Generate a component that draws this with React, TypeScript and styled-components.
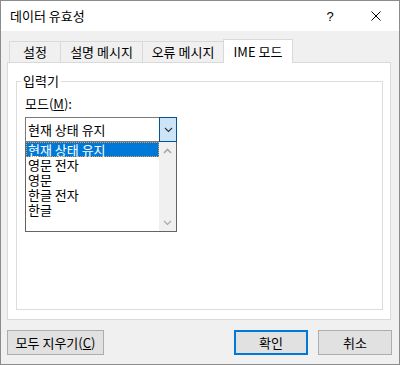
import styled, { createGlobalStyle } from "styled-components";

const GlobalStyle = createGlobalStyle`
  html, body {
    margin: 0;
    padding: 0;
    background: #ffffff;
  }
  body {
    font-family: "Noto Sans CJK KR", "Noto Sans", sans-serif;
    font-size: 13px;
    color: #000000;
  }
  * {
    box-sizing: border-box;
  }
`;

const TABS = [
  { label: "설정", width: 52 },
  { label: "설명 메시지", width: 83 },
  { label: "오류 메시지", width: 82 },
  { label: "IME 모드", width: 70 },
];

const MODES = ["현재 상태 유지", "영문 전자", "영문", "한글 전자", "한글"];

const Chevron = ({ up, color }: { up?: boolean; color: string }) => (
  <svg width="9" height="6" viewBox="0 0 9 6">
    <path
      d={up ? "M1 5 L4.5 1.5 L8 5" : "M1 1 L4.5 4.5 L8 1"}
      fill="none"
      stroke={color}
      strokeWidth={up ? 1.6 : 1.1}
    />
  </svg>
);

const App = () => {
  const activeTab = 3;
  const activeMode = 0;

  return (
    <>
      <GlobalStyle />
      <Window>
        {/* 제목 표시줄 */}
        <TitleBar>
          <Title>데이터 유효성</Title>
          <CaptionButton>?</CaptionButton>
          <CaptionButton>
            <svg width="10" height="10" viewBox="0 0 10 10">
              <path d="M0.5 0.5 L9.5 9.5 M9.5 0.5 L0.5 9.5" stroke="#000" strokeWidth="1" />
            </svg>
          </CaptionButton>
        </TitleBar>

        <Body>
          {/* 탭 */}
          <TabStrip>
            {TABS.map((tab, i) => (
              <Tab key={tab.label} $active={i === activeTab} $width={tab.width}>
                {tab.label}
              </Tab>
            ))}
          </TabStrip>

          <Panel>
            <GroupBox>
              <GroupTitle>입력기</GroupTitle>
              <FieldLabel>
                모드(<u>M</u>):
              </FieldLabel>

              <Combo>
                <ComboValue>{MODES[activeMode]}</ComboValue>
                <ComboButton>
                  <Chevron color="#333333" />
                </ComboButton>
              </Combo>

              {/* 펼쳐진 목록 */}
              <DropList>
                <Items>
                  {MODES.map((mode, i) => (
                    <Item key={mode} $active={i === activeMode}>
                      {mode}
                    </Item>
                  ))}
                </Items>
                <ScrollBar>
                  <ScrollArrow>
                    <Chevron up color="#a6a6a6" />
                  </ScrollArrow>
                  <ScrollArrow>
                    <Chevron color="#a6a6a6" />
                  </ScrollArrow>
                </ScrollBar>
              </DropList>
            </GroupBox>
          </Panel>

          {/* 하단 버튼 */}
          <ButtonRow>
            <Button $width={97}>
              모두 지우기(<u>C</u>)
            </Button>
            <Spacer />
            <Button $width={74} $default>
              확인
            </Button>
            <Button $width={74}>취소</Button>
          </ButtonRow>
        </Body>
      </Window>
    </>
  );
};

export default App;

const Window = styled.div`
  width: 400px;
  height: 365px;
  border: 1px solid #8c8c8c;
  background-color: #f0f0f0;
  display: flex;
  flex-direction: column;
`;

const TitleBar = styled.div`
  height: 30px;
  flex-shrink: 0;
  display: flex;
  align-items: center;
  padding-left: 9px;
  background-color: #ffffff;
`;

const Title = styled.div`
  flex: 1;
  line-height: 16px;
`;

const CaptionButton = styled.div`
  width: 46px;
  height: 30px;
  display: flex;
  align-items: center;
  justify-content: center;
  font-family: "Liberation Sans", sans-serif;
  font-size: 13px;
`;

const Body = styled.div`
  flex: 1;
  display: flex;
  flex-direction: column;
  padding: 8px 7px 9px 6px;
`;

const TabStrip = styled.div`
  position: relative;
  z-index: 1;
  display: flex;
  align-items: flex-end;
  height: 24px;
  margin-bottom: -1px;
  padding-left: 2px;
`;

const Tab = styled.div<{ $active: boolean; $width: number }>`
  width: ${({ $width }) => $width}px;
  height: ${({ $active }) => ($active ? 24 : 21)}px;
  margin-right: -1px;
  margin-bottom: ${({ $active }) => ($active ? 0 : 1)}px;
  padding-top: ${({ $active }) => ($active ? 4 : 2)}px;
  display: flex;
  justify-content: center;
  line-height: 16px;
  white-space: nowrap;
  border: 1px solid #d9d9d9;
  border-bottom: none;
  background-color: ${({ $active }) => ($active ? "#ffffff" : "#f0f0f0")};
`;

const Panel = styled.div`
  height: 258px;
  flex-shrink: 0;
  margin-right: 1px;
  display: flex;
  flex-direction: column;
  background-color: #ffffff;
  border: 1px solid #d9d9d9;
`;

const GroupBox = styled.div`
  flex: 1;
  margin: 18px 7px 9px 8px;
  padding: 0 8px;
  border: 1px solid #dcdcdc;
  display: flex;
  flex-direction: column;
  align-items: flex-start;
`;

const GroupTitle = styled.div`
  margin: -9px 0 0 -4px;
  padding: 0 2px;
  line-height: 16px;
  background-color: #ffffff;
`;

const FieldLabel = styled.div`
  margin-top: 7px;
  line-height: 16px;
`;

const Combo = styled.div`
  margin-top: 5px;
  width: 152px;
  height: 25px;
  display: flex;
  align-items: center;
  border: 1px solid #7a7a7a;
  background-color: #ffffff;
`;

const ComboValue = styled.div`
  flex: 1;
  padding-left: 2px;
  line-height: 16px;
`;

const ComboButton = styled.div`
  width: 18px;
  align-self: stretch;
  margin: -1px -1px -1px 0;
  display: flex;
  align-items: center;
  justify-content: center;
  border: 1px solid #005499;
  background-color: #cce4f7;
`;

const DropList = styled.div`
  width: 152px;
  height: 90px;
  display: flex;
  border: 1px solid #646464;
  border-top: none;
  background-color: #ffffff;
`;

const Items = styled.div`
  flex: 1;
  display: flex;
  flex-direction: column;
`;

const Item = styled.div<{ $active: boolean }>`
  height: 15px;
  line-height: 15px;
  padding-left: 2px;
  white-space: nowrap;
  color: ${({ $active }) => ($active ? "#ffffff" : "#000000")};
  background-color: ${({ $active }) => ($active ? "#0078d7" : "transparent")};
  outline: ${({ $active }) => ($active ? "1px dotted #f0a040" : "none")};
  outline-offset: -1px;
`;

const ScrollBar = styled.div`
  width: 17px;
  display: flex;
  flex-direction: column;
  justify-content: space-between;
  background-color: #f0f0f0;
`;

const ScrollArrow = styled.div`
  height: 17px;
  display: flex;
  align-items: center;
  justify-content: center;
`;

const ButtonRow = styled.div`
  margin-top: 10px;
  height: 25px;
  flex-shrink: 0;
  display: flex;
  gap: 10px;
`;

const Spacer = styled.div`
  flex: 1;
`;

const Button = styled.div<{ $width: number; $default?: boolean }>`
  width: ${({ $width }) => $width}px;
  height: 25px;
  display: flex;
  align-items: center;
  justify-content: center;
  line-height: 16px;
  white-space: nowrap;
  background-color: #e1e1e1;
  border: ${({ $default }) => ($default ? "2px solid #0078d7" : "1px solid #adadad")};
`;
